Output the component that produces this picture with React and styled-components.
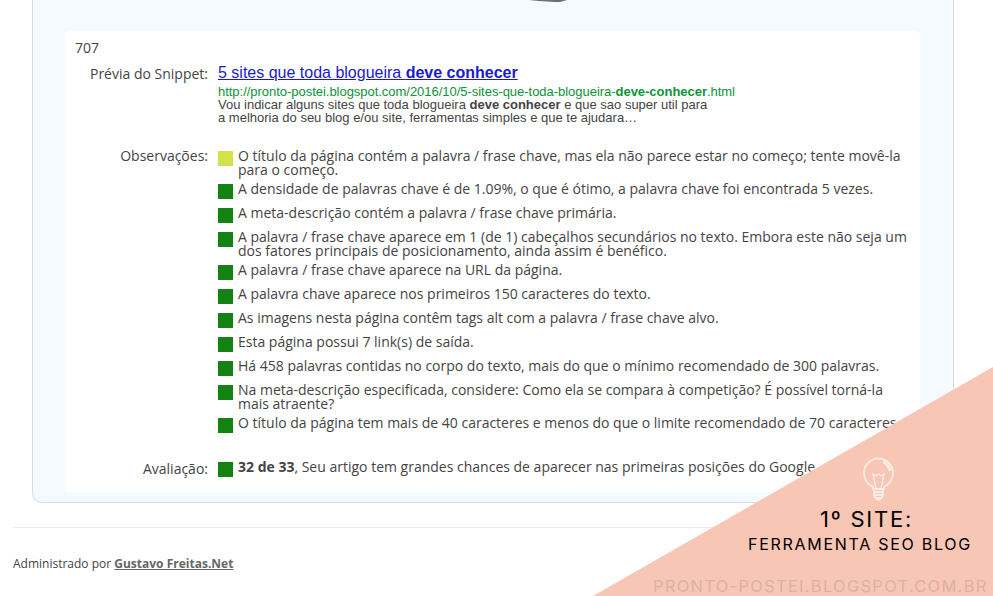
import React from 'react';
import styled, { createGlobalStyle } from 'styled-components';

const GlobalStyle = createGlobalStyle`
  * {
    box-sizing: border-box;
  }

  body {
    margin: 0;
    background: #fff;
    color: #444;
    font-family: 'Open Sans', sans-serif;
    font-size: 14px;
  }
`;

const Page = styled.div`
  position: relative;
  width: 993px;
  height: 596px;
  overflow: hidden;
`;

const Panel = styled.main`
  position: relative;
  width: 922px;
  height: 503px;
  margin-left: 32px;
  padding: 31px 33px 10px 32px;
  background: #f4fafe;
  border: 1px solid #d9dbdd;
  border-top: 0;
  border-radius: 0 0 10px 10px;
`;

const ImageEdge = styled.svg`
  position: absolute;
  top: 0;
  left: 492px;
`;

const Report = styled.section`
  height: 461px;
  padding: 9px 10px 0;
  background: #fff;
  border-radius: 5px;
`;

const Count = styled.div`
  height: 24px;
  line-height: 15px;
`;

const Field = styled.div`
  display: grid;
  grid-template-columns: 133px 1fr;
  column-gap: 10px;
  height: ${(props) => props.$height}px;
`;

const Label = styled.div`
  margin-top: ${(props) => props.$offset || 0}px;
  line-height: 18px;
  text-align: right;
`;

const Snippet = styled.div`
  font-family: 'Liberation Sans', Arial, sans-serif;
  font-size: 13px;
  line-height: 13px;
`;

const SnippetTitle = styled.a`
  display: block;
  height: 21px;
  color: #1a1acc;
  font-size: 16px;
  line-height: 17px;
  text-decoration: underline;
`;

const SnippetUrl = styled.div`
  color: #0e9339;
  letter-spacing: -0.03px;
`;

const SnippetText = styled.div`
  white-space: nowrap;
`;

const Notes = styled.ul`
  margin: 0;
  padding: 0;
  list-style: none;
`;

const Note = styled.li`
  display: flex;
  gap: 5px;
  min-height: 19px;
  margin-bottom: 5px;
  line-height: 14px;
  white-space: nowrap;
`;

const Status = styled.span`
  flex: none;
  width: 15px;
  height: 15px;
  margin-top: 2px;
  background: ${(props) => (props.$warn ? '#d3e24a' : '#138213')};
`;

const Footer = styled.footer`
  margin: 24px 13px 0;
  padding-top: 27px;
  border-top: 1px solid #ebebeb;
  font-size: 12px;
  line-height: 18px;
`;

const FooterLink = styled.a`
  color: #666;
  font-weight: 700;
  text-decoration: underline;
`;

const Corner = styled.aside`
  position: absolute;
  right: 0;
  bottom: 0;
  width: 400px;
  height: 229px;
  padding-top: 89px;
  background: #f7c6b5;
  clip-path: polygon(100% 0, 100% 100%, 0 100%);
  color: #000;
  font-family: Inter, sans-serif;
  white-space: nowrap;
`;

const Bulb = styled.svg`
  display: block;
  margin-left: 267px;
`;

const CornerTitle = styled.div`
  margin: 4px 0 0 227px;
  font-size: 22px;
  line-height: 26px;
  letter-spacing: 1.8px;
`;

const CornerText = styled.div`
  margin-left: 155px;
  font-size: 16px;
  line-height: 24px;
  letter-spacing: 1.72px;
`;

const Watermark = styled.div`
  margin: 18px 0 0 60px;
  color: #dfb1a2;
  font-size: 16.5px;
  line-height: 24px;
  letter-spacing: 1.27px;
`;

const notes = [
  {
    warn: true,
    lines: [
      'O título da página contém a palavra / frase chave, mas ela não parece estar no começo; tente movê-la',
      'para o começo.'
    ]
  },
  { lines: ['A densidade de palavras chave é de 1.09%, o que é ótimo, a palavra chave foi encontrada 5 vezes.'] },
  { lines: ['A meta-descrição contém a palavra / frase chave primária.'] },
  {
    lines: [
      'A palavra / frase chave aparece em 1 (de 1) cabeçalhos secundários no texto. Embora este não seja um',
      'dos fatores principais de posicionamento, ainda assim é benéfico.'
    ]
  },
  { lines: ['A palavra / frase chave aparece na URL da página.'] },
  { lines: ['A palavra chave aparece nos primeiros 150 caracteres do texto.'] },
  { lines: ['As imagens nesta página contêm tags alt com a palavra / frase chave alvo.'] },
  { lines: ['Esta página possui 7 link(s) de saída.'] },
  { lines: ['Há 458 palavras contidas no corpo do texto, mais do que o mínimo recomendado de 300 palavras.'] },
  {
    lines: [
      'Na meta-descrição especificada, considere: Como ela se compara à competição? É possível torná-la',
      'mais atraente?'
    ]
  },
  { lines: ['O título da página tem mais de 40 caracteres e menos do que o limite recomendado de 70 caracteres'] }
];

const App = () => (
  <Page>
    <GlobalStyle />
    <Panel>
      <ImageEdge width="46" height="4" viewBox="0 0 46 4">
        <path d="M4 0H42L35 2Q25 2 4 0Z" fill="#555" opacity="0.85" />
      </ImageEdge>
      <Report>
        <Count>707</Count>
        <Field $height={85}>
          <Label $offset={1}>Prévia do Snippet:</Label>
          <Snippet>
            <SnippetTitle>
              5 sites que toda blogueira <b>deve conhecer</b>
            </SnippetTitle>
            <SnippetUrl>
              http://pronto-postei.blogspot.com/2016/10/5-sites-que-toda-blogueira-<b>deve-conhecer</b>.html
            </SnippetUrl>
            <SnippetText>
              Vou indicar alguns sites que toda blogueira <b>deve conhecer</b> e que sao super util para
              <br />
              a melhoria do seu blog e/ou site, ferramentas simples e que te ajudara…
            </SnippetText>
          </Snippet>
        </Field>
        <Field $height={311}>
          <Label $offset={-2}>Observações:</Label>
          <Notes>
            {notes.map((note, index) => (
              <Note key={index}>
                <Status $warn={note.warn} />
                <div>
                  {note.lines.map((line) => (
                    <div key={line}>{line}</div>
                  ))}
                </div>
              </Note>
            ))}
          </Notes>
        </Field>
        <Field $height={24}>
          <Label>Avaliação:</Label>
          <Note as="div">
            <Status />
            <div>
              <b>32 de 33</b>, Seu artigo tem grandes chances de aparecer nas primeiras posições do Google
            </div>
          </Note>
        </Field>
      </Report>
    </Panel>
    <Footer>
      Administrado por <FooterLink>Gustavo Freitas.Net</FooterLink>
    </Footer>
    <Corner>
      <Bulb width="36" height="46" viewBox="0 0 36 46" fill="none" stroke="#fff" strokeOpacity="0.65" strokeWidth="1.8">
        <path d="M13 33V31Q4 26 4 17A14.5 14.5 0 0 1 33 17Q33 26 24 31V33Z" />
        <path d="M16 33L13 18L16 20L18.5 18L21 20L24 18L21 33" strokeWidth="1.4" />
        <path d="M23 5.5Q29 9 30 15" strokeWidth="3" />
        <path d="M14 34V40L17 43.5H20L23 40V34M14 36H23M14 39H23M15 42H22" strokeWidth="1.8" />
      </Bulb>
      <CornerTitle>1º SITE:</CornerTitle>
      <CornerText>FERRAMENTA SEO BLOG</CornerText>
      <Watermark>PRONTO-POSTEI.BLOGSPOT.COM.BR</Watermark>
    </Corner>
  </Page>
);

export default App;
